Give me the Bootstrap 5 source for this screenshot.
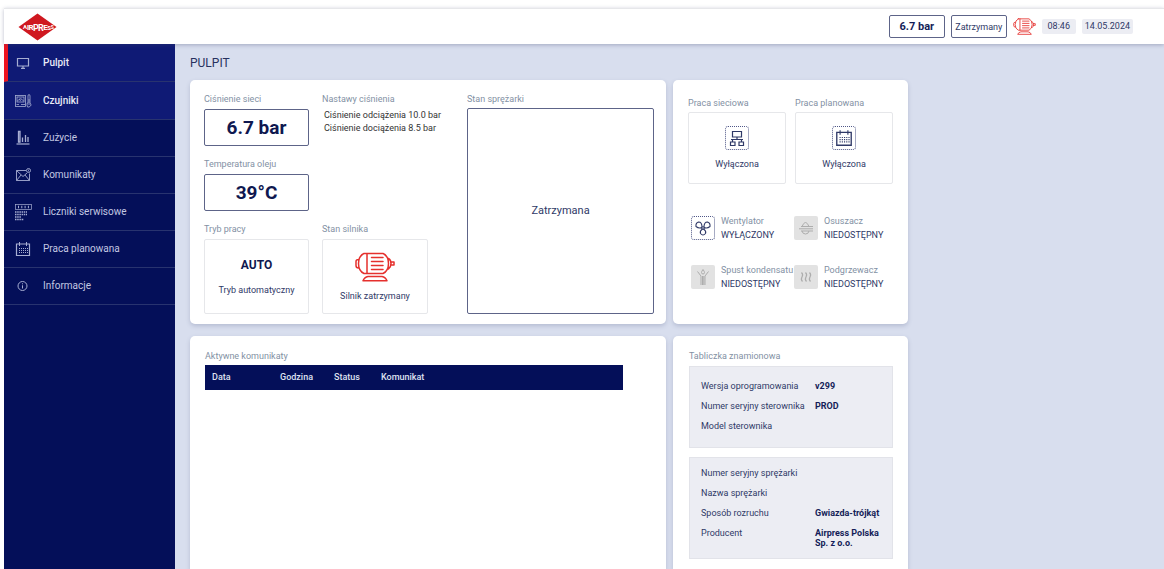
<!DOCTYPE html>
<html lang="pl">
<head>
<meta charset="utf-8">
<meta name="viewport" content="width=device-width, initial-scale=1">
<title>Airpress – Pulpit</title>
<link href="https://cdn.jsdelivr.net/npm/bootstrap@5.3.0/dist/css/bootstrap.min.css" rel="stylesheet">
<style>
  :root { --navy: #040f59; --navy-active: #0f1a75; --ink: #2f3967; --muted-ink: #8391a4; --page: #d8deee; --red: #e5302d; }
  body { font-family: Roboto, sans-serif; font-size: 9px; line-height: 12px; color: var(--ink); background: #fff; }
  .app { min-height: 100vh; padding: 8px 0 0 4px; }
  .topbar { height: 36px; border-top: 1px solid #e6e7ea; background: #fff; box-shadow: 0 1px 4px rgba(60,70,110,.35); z-index: 2; padding: 0 31px 0 13px; gap: 6px; }
  .outline-box { border: 1px solid #5d6488; border-radius: 2px; background: #fff; }
  .top-box { height: 23px; width: 56px; }
  .top-pressure { font-size: 11px; font-weight: 700; color: #141d58; }
  .chip { background: #ecedf3; border-radius: 2px; height: 15px; line-height: 15px; padding: 0 3px; min-width: 34px; text-align: center; }
  .motor-icon { color: var(--red); }
  .sidebar { width: 171px; background: var(--navy); }
  .side-link { height: 37px; padding-left: 10px; gap: 11px; font-size: 10px; color: #c3c8e2; text-decoration: none; border-bottom: 1px solid #28336f; }
  .side-link svg { width: 18px; height: 18px; flex: none; color: #a7aed2; }
  .side-link.on { background: var(--navy-active); color: #e9ebf7; font-weight: 500; height: 38px; }
  .side-link.current { border-left: 4px solid #ee1420; padding-left: 6px; }
  .content { background: var(--page); padding: 10px 15px 0; }
  h1 { font-size: 12px; line-height: 18px; font-weight: 400; color: #27315f; margin: 0 0 8px; }
  .board { max-width: 718px; display: grid; grid-template-columns: 476fr 235fr; grid-template-rows: auto 1fr; column-gap: 7px; row-gap: 12px; }
  .panel { background: #fff; border-radius: 5px; box-shadow: 0 2px 4px rgba(80,90,130,.25); min-width: 0; }
  .panel-open { border-radius: 5px 5px 0 0; }
  .cap { font-size: 9px; line-height: 12px; font-weight: 400; color: var(--muted-ink); margin: 0; }
  .readings { padding: 13px 12px 10px 14px; display: grid; grid-template-columns: minmax(0, 105fr) minmax(0, 106fr) minmax(0, 213fr); column-gap: 13px; }
  .reading { font-size: 19px; font-weight: 700; color: #0f1850; height: 37px; margin: 4px 0 12px; }
  .tile { border: 1px solid #e6e7ea; border-radius: 2px; }
  .mode-tile { height: 75px; margin-top: 4px; }
  .mode-name { font-size: 12px; font-weight: 700; color: #0f1850; line-height: 14px; margin-bottom: 12px; }
  .settings { color: #333; line-height: 13px; padding: 4px 0 0 2px; white-space: nowrap; }
  .compressor { margin-left: 26px; }
  .compressor .outline-box { font-size: 11px; margin-top: 3px; }
  .functions { padding: 17px 15px 33px; display: grid; grid-template-columns: 1fr 1fr; column-gap: 9px; }
  .work-tile { height: 72px; margin-top: 3px; gap: 8px; padding-bottom: 1px; }
  .dash-box { width: 24px; height: 24px; border: 1px dotted #4f5787; border-radius: 3px; flex: none; }
  .off-box { width: 24px; height: 24px; border-radius: 2px; background: #e2e2e2; color: #adadad; flex: none; }
  .devices { padding: 0 0 0 3px; grid-column: 1 / 3; display: grid; grid-template-columns: 103fr 99fr; row-gap: 21px; margin-top: 30px; white-space: nowrap; }
  .device { gap: 6px; }
  .device .lines, .device .cap { line-height: 14px; }
  .log-panel { padding: 14px 15px 0; }
  .plate-panel { padding: 14px 15px 0 16px; }
  .log { width: 418px; max-width: 100%; margin: 3px 0 0; table-layout: fixed; }
  .log th { background: var(--navy); color: #dfe2f0; font-weight: 500; padding: 6px 0; line-height: 13px; }
  .log th:first-child { padding-left: 7px; }
  .plate { background: #ecedf3; border: 1px solid #e2e3e9; padding: 10px 11px; margin: 0 0 9px; }
  .plate div { display: grid; grid-template-columns: 114fr 66fr; line-height: 10px; margin-top: 10px; }
  .plate dt { font-weight: 400; white-space: nowrap; }
  .plate dd { font-weight: 700; color: #141d58; margin: 0; }
</style>
<script src="https://cdn.jsdelivr.net/npm/bootstrap@5.3.0/dist/js/bootstrap.bundle.min.js"></script>
</head>
<body>
<svg class="d-none" aria-hidden="true">
  <symbol id="motor" viewBox="0 0 40 30"><g fill="none" stroke="currentColor" stroke-width="1.500" stroke-linejoin="round" stroke-linecap="round"><path d="M9 1.500H28Q33.500 4 33.500 11.500T28 21.500H9Q3.500 19 3.500 11.500T9 1.500ZM12 1.500V21.500M3.500 7.500Q1 7.500 1 9.500V13.500Q1 16 3.500 16M33.500 6.500Q36 8 36 11.500T33.500 17M36 10H39V13H36"/><path d="M16.500 5.500H28M16.500 9.500H28M16.500 13.500H28M16.500 17.500H28"/><path d="M13 24.500Q9.500 25 8 28.800H32Q30.500 25 27 24.500Z"/></g></symbol>
  <symbol id="calendar" viewBox="0 0 18 18"><g fill="none" stroke="currentColor"><path d="M2.500 4H15.500V15.500H2.500Z" stroke-width="1.200"/><path d="M5.500 2V6M12.500 2V6"/><path d="M5 8.500H14M5 10.500H14M5 12.500H14" stroke-dasharray="1 1"/></g></symbol>
</svg>
<div class="app d-flex flex-column">
  <header class="topbar d-flex align-items-center position-relative">
    <a href="#" class="d-flex me-auto" aria-label="Airpress">
      <svg width="40" height="28" viewBox="0 0 40 28"><path d="M20.500 .5 39.500 14 20.500 27.500 1.500 14Z" fill="#cf1820"/><text fill="#fff" font-family="Roboto, sans-serif" font-weight="700" text-anchor="middle"><tspan x="8" y="16" font-size="6">A</tspan><tspan x="11" y="16.500" font-size="7">I</tspan><tspan x="14" y="17" font-size="8">R</tspan><tspan x="19" y="17.500" font-size="9">P</tspan><tspan x="24" y="17.500" font-size="9">R</tspan><tspan x="28.500" y="17" font-size="8">E</tspan><tspan x="32.200" y="16.500" font-size="6">S</tspan><tspan x="35.300" y="16" font-size="5">S</tspan></text></svg>
    </a>
    <div class="top-box top-pressure outline-box d-flex align-items-center justify-content-center">6.7 bar</div>
    <div class="top-box outline-box d-flex align-items-center justify-content-center">Zatrzymany</div>
    <svg class="motor-icon" width="23" height="17"><use href="#motor"/></svg>
    <time class="chip">08:46</time>
    <time class="chip" datetime="2024-05-14">14.05.2024</time>
  </header>
  <div class="d-flex flex-grow-1">
    <nav class="sidebar flex-shrink-0 d-flex flex-column">
      <a class="side-link on current d-flex align-items-center" href="#" aria-current="page"><svg viewBox="0 0 18 18"><path d="M3.500 4.500H14.500V12H3.500ZM9 12V14M7 14.300H11" fill="none" stroke="currentColor" stroke-width="1.200"/></svg>Pulpit</a>
      <a class="side-link on d-flex align-items-center" href="#"><svg viewBox="0 0 18 18"><g fill="none" stroke="currentColor" stroke-width=".8"><rect x="1.500" y="3.500" width="10" height="11"/><rect x="3" y="5" width="7" height="5"/><path d="M3.500 9Q6.500 4.500 9.500 9M6.500 9 5.500 7M2.500 12.500H5M7 12.500H11"/><path d="M14 11V4Q14 2.500 15 2.500T16 4V11Q17 12 17 13T15 15T13 13T14 11ZM15 7V13"/></g></svg>Czujniki</a>
      <a class="side-link d-flex align-items-center" href="#"><svg viewBox="0 0 18 18"><path d="M2.500 15H15.500" stroke="currentColor" stroke-width="1.200"/><path d="M4.500 13V2.500H6V13ZM8.500 13V8.500M11.500 13V6M14 13V8" fill="none" stroke="currentColor" stroke-width="1.300"/></svg>Zużycie</a>
      <a class="side-link d-flex align-items-center" href="#"><svg viewBox="0 0 18 18"><g fill="none" stroke="currentColor" stroke-width=".9"><path d="M12 4.500H2.500V14.500H15.500V7.500M2.500 4.500 9 10.500 13 7M2.500 14.500 7 9M15.500 14.500 11 9"/><circle cx="14.500" cy="4.500" r="2"/><path d="M14.500 3.500V5.500" stroke-width=".7"/></g></svg>Komunikaty</a>
      <a class="side-link d-flex align-items-center" href="#"><svg viewBox="0 0 18 18"><g fill="none" stroke="currentColor"><rect x="1.500" y="1.500" width="16" height="5" stroke-width=".7"/><path d="M4 4H16" stroke-width="2.400" stroke-dasharray="1 2.300"/><path d="M1 9H13M1 11.500H13M1 14H7M1 16.500H10" stroke-width="1.600" stroke-dasharray="1.500 .7"/></g></svg>Liczniki serwisowe</a>
      <a class="side-link d-flex align-items-center" href="#"><svg><use href="#calendar"/></svg>Praca planowana</a>
      <a class="side-link d-flex align-items-center" href="#"><svg viewBox="0 0 18 18"><g fill="none" stroke="currentColor"><circle cx="8.500" cy="9" r="4.500"/><path d="M8.500 8.300V11.500M8.500 6.300V7.300"/></g></svg>Informacje</a>
    </nav>
    <main class="content flex-grow-1 d-flex flex-column">
      <h1>PULPIT</h1>
      <div class="board flex-grow-1">
        <section class="panel readings">
          <div>
            <h2 class="cap">Ciśnienie sieci</h2>
            <div class="reading outline-box d-flex align-items-center justify-content-center">6.7 bar</div>
            <h2 class="cap">Temperatura oleju</h2>
            <div class="reading outline-box d-flex align-items-center justify-content-center">39°C</div>
            <h2 class="cap">Tryb pracy</h2>
            <div class="tile mode-tile d-flex flex-column align-items-center justify-content-center"><div class="mode-name">AUTO</div>Tryb automatyczny</div>
          </div>
          <div class="d-flex flex-column">
            <h2 class="cap">Nastawy ciśnienia</h2>
            <div class="settings">Ciśnienie odciążenia 10.0 bar<br>Ciśnienie dociążenia 8.5 bar</div>
            <h2 class="cap mt-auto">Stan silnika</h2>
            <div class="tile mode-tile d-flex flex-column align-items-center justify-content-center"><svg width="40" height="30" class="motor-icon mb-2"><use href="#motor"/></svg>Silnik zatrzymany</div>
          </div>
          <div class="compressor d-flex flex-column">
            <h2 class="cap">Stan sprężarki</h2>
            <div class="outline-box flex-grow-1 d-flex align-items-center justify-content-center">Zatrzymana</div>
          </div>
        </section>
        <section class="panel functions">
          <div>
            <h2 class="cap">Praca sieciowa</h2>
            <div class="tile work-tile d-flex flex-column align-items-center justify-content-center"><span class="dash-box d-flex align-items-center justify-content-center"><svg width="18" height="18" viewBox="0 0 18 18"><path d="M4.500 2.500H13.500V8H4.500ZM9 8V10.500M3 10.500H15M2.500 13H7V16.500H2.500ZM11 13H15.500V16.500H11ZM4.500 10.500V13M13.500 10.500V13" fill="none" stroke="currentColor" stroke-width="1.200"/></svg></span>Wyłączona</div>
          </div>
          <div>
            <h2 class="cap">Praca planowana</h2>
            <div class="tile work-tile d-flex flex-column align-items-center justify-content-center"><span class="dash-box d-flex align-items-center justify-content-center"><svg width="20" height="20"><use href="#calendar"/></svg></span>Wyłączona</div>
          </div>
          <div class="devices">
            <div class="device d-flex align-items-center"><span class="dash-box d-flex align-items-center justify-content-center"><svg width="18" height="18" viewBox="0 0 18 18"><g fill="none" stroke="currentColor" stroke-width="1.100"><circle cx="9" cy="9" r="1.300"/><path d="M8 8Q8 3 4.500 3Q1.500 4 2 7.500Q5 10 8 8.500M10 8Q10 3 13.500 3Q16.500 4 16 7.500Q13 10 10 8.500M8.500 10Q5.500 12 6.500 14.500Q9 17.500 11.500 14.500Q12.500 12 9.500 10"/></g></svg></span><div class="lines"><div class="cap">Wentylator</div>WYŁĄCZONY</div></div>
            <div class="device d-flex align-items-center"><span class="off-box d-flex align-items-center justify-content-center"><svg width="18" height="18" viewBox="0 0 18 18"><path d="M5 7.500Q6 5 8.500 3Q11 5 12 7.500M4 7.500H16M2 9.800H16M4 12H16M5 12Q5.500 15 8.500 15T12 12" fill="none" stroke="currentColor"/></svg></span><div class="lines"><div class="cap">Osuszacz</div>NIEDOSTĘPNY</div></div>
            <div class="device d-flex align-items-center"><span class="off-box d-flex align-items-center justify-content-center"><svg width="18" height="18" viewBox="0 0 18 18"><path d="M9 1.500Q7.500 3.500 7.500 4.500Q7.500 6 9 6T10.500 4.500Q10.500 3.500 9 1.500ZM3.500 3.500 7 8V17M14.500 3.500 11 8V17M8.500 8V17M9.800 8V17" fill="none" stroke="currentColor"/></svg></span><div class="lines"><div class="cap">Spust kondensatu</div>NIEDOSTĘPNY</div></div>
            <div class="device d-flex align-items-center"><span class="off-box d-flex align-items-center justify-content-center"><svg width="18" height="18" viewBox="0 0 18 18"><path d="M4.500 4.500Q6.500 6.500 5 9T5.500 13.500M8.500 4.500Q10.500 6.500 9 9T9.500 13.500M12.500 4.500Q14.500 6.500 13 9T13.500 13.500" fill="none" stroke="currentColor" stroke-width="1.200"/></svg></span><div class="lines"><div class="cap">Podgrzewacz</div>NIEDOSTĘPNY</div></div>
          </div>
        </section>
        <section class="panel panel-open log-panel">
          <h2 class="cap" id="log-title">Aktywne komunikaty</h2>
          <table class="log" aria-labelledby="log-title">
            <colgroup><col style="width:75px"><col style="width:54px"><col style="width:47px"><col></colgroup>
            <thead><tr><th>Data</th><th>Godzina</th><th>Status</th><th>Komunikat</th></tr></thead>
            <tbody></tbody>
          </table>
        </section>
        <section class="panel panel-open plate-panel">
          <h2 class="cap mb-1">Tabliczka znamionowa</h2>
          <dl class="plate pb-3">
            <div class="mt-1"><dt>Wersja oprogramowania</dt><dd>v299</dd></div>
            <div><dt>Numer seryjny sterownika</dt><dd>PROD</dd></div>
            <div><dt>Model sterownika</dt><dd></dd></div>
          </dl>
          <dl class="plate">
            <div class="mt-0"><dt>Numer seryjny sprężarki</dt><dd></dd></div>
            <div><dt>Nazwa sprężarki</dt><dd></dd></div>
            <div><dt>Sposób rozruchu</dt><dd>Gwiazda-trójkąt</dd></div>
            <div><dt>Producent</dt><dd>Airpress Polska Sp. z o.o.</dd></div>
          </dl>
        </section>
      </div>
    </main>
  </div>
</div>
</body>
</html>
